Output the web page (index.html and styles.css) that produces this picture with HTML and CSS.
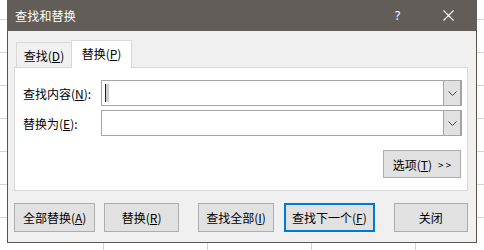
FILE: index.html
```html
<!DOCTYPE html>
<html lang="zh-CN">
<head>
<meta charset="utf-8">
<title>查找和替换</title>
<link rel="stylesheet" href="styles.css">
</head>
<body>
<div class="sheet">
  <div class="dialog">
    <div class="titlebar">
      <span class="title">查找和替换</span>
      <span class="help">?</span>
      <span class="close"><svg width="11" height="11" viewBox="0 0 11 11"><path d="M0.5 0.5L10.5 10.5M10.5 0.5L0.5 10.5" stroke="#fff" stroke-width="1.1" fill="none"/></svg></span>
    </div>
    <div class="content">
      <div class="tabs">
        <div class="tab">查找(<u>D</u>)</div>
        <div class="tab active">替换(<u>P</u>)</div>
      </div>
      <div class="panel">
        <div class="row">
          <span class="label">查找内容(<u>N</u>):</span>
          <div class="combo">
            <div class="field"><span class="caret"></span></div>
            <div class="drop"><svg width="9" height="5" viewBox="0 0 9 5"><path d="M0.5 0.5L4.5 4.5L8.5 0.5" stroke="#444" stroke-width="1" fill="none"/></svg></div>
          </div>
        </div>
        <div class="row">
          <span class="label">替换为(<u>E</u>):</span>
          <div class="combo">
            <div class="field"></div>
            <div class="drop"><svg width="9" height="5" viewBox="0 0 9 5"><path d="M0.5 0.5L4.5 4.5L8.5 0.5" stroke="#444" stroke-width="1" fill="none"/></svg></div>
          </div>
        </div>
        <div class="opts">
          <button class="btn btn-opts">选项(<u>T</u>)<span class="arrows">&gt; &gt;</span></button>
        </div>
      </div>
      <div class="buttons">
        <button class="btn b-all">全部替换(<u>A</u>)</button>
        <button class="btn b-rep">替换(<u>R</u>)</button>
        <button class="btn b-findall">查找全部(<u>I</u>)</button>
        <button class="btn b-next">查找下一个(<u>F</u>)</button>
        <button class="btn b-close">关闭</button>
      </div>
    </div>
  </div>
</div>
</body>
</html>
```

FILE: styles.css
```css
* { box-sizing: border-box; }
html, body { margin: 0; padding: 0; }
body {
  width: 484px;
  height: 250px;
  overflow: hidden;
  font-family: "Noto Sans CJK SC", "Noto Sans", sans-serif;
  font-size: 12px;
  color: #000;
  background-color: #fff;
  background-image:
    linear-gradient(to bottom, #d4d4d4 1px, transparent 1px),
    linear-gradient(to right, #d4d4d4 1px, transparent 1px);
  background-size: 100% 33px, 104px 100%;
  background-position: 0 19px, 103px 0;
}
.sheet { padding-left: 7px; }
.dialog {
  width: 470px;
  height: 243px;
  background: #f0f0f0;
  border: 1px solid #5a5550;
  border-top: none;
  display: flex;
  flex-direction: column;
}
.titlebar {
  height: 31px;
  background: #625d58;
  color: #fff;
  display: flex;
  align-items: center;
  padding-left: 8px;
  margin: 0 -1px;
}
.title { flex: 1; font-size: 12px; letter-spacing: 0.2px; }
.help { width: 14px; margin-right: 34px; font-family: "Noto Sans", sans-serif; font-size: 12px; }
.close { width: 11px; height: 11px; margin-right: 23px; display: flex; }
.content { padding: 9px 8px 0 6px; flex: 1; display: flex; flex-direction: column; }
.tabs { display: flex; align-items: flex-end; padding-left: 2px; height: 27px; position: relative; z-index: 1; }
.tab {
  height: 25px;
  border: 1px solid #d9d9d9;
  border-bottom: none;
  display: flex;
  align-items: center;
  justify-content: center;
  white-space: nowrap;
  background: #f0f0f0;
}
.tab:first-child { width: 55px; border-right: none; }
.tab.active {
  height: 28px;
  width: 61px;
  background: #fff;
  border-right: 1px solid #d9d9d9;
  margin-bottom: -1px;
  padding-bottom: 2px;
}
.panel {
  height: 124px;
  background: #fff;
  border: 1px solid #d9d9d9;
  padding: 12px 5px 0 8px;
  display: flex;
  flex-direction: column;
}
.row { display: flex; align-items: center; height: 26px; margin-bottom: 4px; }
.label { width: 78px; white-space: nowrap; }
.combo {
  flex: 1;
  height: 26px;
  border: 1px solid #a5a5a5;
  display: flex;
}
.field { flex: 1; padding: 3px 3px; display: flex; }
.caret { width: 4px; height: 18px; border-left: 1px solid #222; background: #cfcfcf; }
.drop {
  width: 18px;
  background: #e1e1e1;
  border-left: 1px solid #a5a5a5;
  border-right: 1px solid #a5a5a5;
  display: flex;
  align-items: center;
  justify-content: center;
}
.opts { display: flex; justify-content: flex-end; margin-top: 10px; padding-right: 1px; }
u { text-decoration: underline; text-underline-offset: 1px; }
.btn {
  font-family: "Noto Sans CJK SC", "Noto Sans", sans-serif;
  font-size: 12px;
  color: #000;
  background: #e1e1e1;
  border: 1px solid #adadad;
  padding: 0;
  height: 29px;
  display: flex;
  align-items: center;
  justify-content: center;
  white-space: nowrap;
}
.btn-opts { width: 78px; height: 28px; }
.arrows { font-size: 10px; margin-left: 6px; letter-spacing: 0; }
.buttons { display: flex; margin-top: 12px; }
.b-all { width: 82px; }
.b-rep { width: 75px; margin-left: 9px; }
.b-findall { width: 77px; margin-left: 19px; }
.b-next { width: 91px; margin-left: 10px; border: 2px solid #0078d7; }
.b-close { width: 75px; margin-left: 19px; }
```
